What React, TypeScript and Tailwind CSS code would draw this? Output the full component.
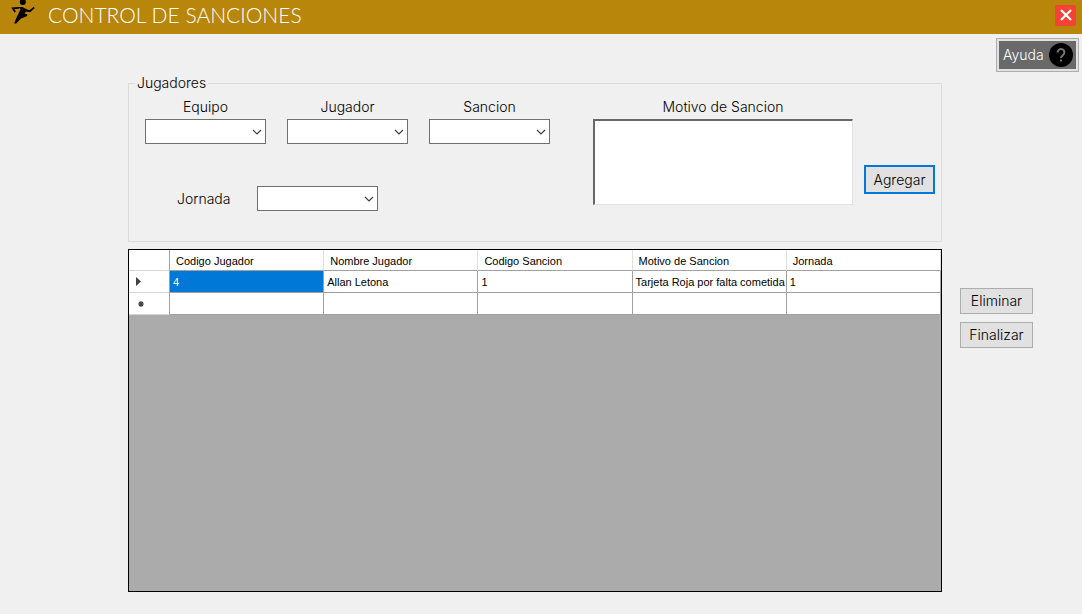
import { useId } from "react";
import type { ReactNode } from "react";

function RunnerIcon() {
  return (
    <svg viewBox="0 0 26 26" className="h-[26px] w-[26px]" aria-hidden="true">
      <circle cx="12.800" cy="2" r="3" fill="#000" />
      <path d="M5.200 12 2.800 8.300 9 7.800" fill="none" stroke="#000" strokeWidth="1.700" />
      <path d="M8.500 7h4l3.500 2 3.500 1.300L23.800 6.800l.7 1.400L20 12.300l-4-.7-1.500 1.900 2.700.8v1.700L11 18.500 6 23.800l-1.800-.6L6.800 17l1.700-3.500L10.500 9.300Z" fill="#000" />
    </svg>
  );
}

function HelpIcon() {
  return (
    <svg viewBox="0 0 24 24" className="h-6 w-6 shrink-0" aria-hidden="true">
      <circle cx="12" cy="12" r="12" fill="#000" />
      <path d="M8.600 9.500a3.400 3.400 0 1 1 5.200 2.800c-1.200.8-1.800 1.300-1.800 2.700" fill="none" stroke="#777" strokeWidth="2" />
      <rect x="11" y="16.500" width="2" height="2" fill="#777" />
    </svg>
  );
}

function Combo({ id }: { id: string }) {
  return (
    <span className="relative block">
      <select id={id} className="block h-[25px] w-[121px] appearance-none rounded-none border border-[#707070] bg-white px-1 outline-none">
        <option value=""></option>
      </select>
      <svg viewBox="0 0 10 6" className="pointer-events-none absolute top-[10px] right-1 h-[6px] w-[10px]" aria-hidden="true">
        <path d="M1 1l4 4 4-4" fill="none" stroke="#404040" strokeWidth="1.200" />
      </svg>
    </span>
  );
}

function LabeledCombo({ label }: { label: string }) {
  const id = useId();
  return (
    <div>
      <label htmlFor={id} className="block pb-1 text-center leading-4">
        {label}
      </label>
      <Combo id={id} />
    </div>
  );
}

function ActionButton({ children }: { children: ReactNode }) {
  return (
    <button type="button" className="h-[26px] w-[73px] border border-[#adadad] bg-[#e1e1e1] leading-4">
      {children}
    </button>
  );
}

const columns = ["Codigo Jugador", "Nombre Jugador", "Codigo Sancion", "Motivo de Sancion", "Jornada"];
const record = ["4", "Allan Letona", "1", "Tarjeta Roja por falta cometida", "1"];

function SanctionsTable() {
  return (
    <div className="flex-1 border border-black bg-[#ababab] font-['Liberation_Sans',Arial,sans-serif] text-[11px] leading-4 font-normal">
      <table className="w-full table-fixed border-separate border-spacing-0 bg-white text-left">
        <thead>
          <tr className="h-[21px]">
            <th className="w-[41px] border-r border-b border-r-[#a0a0a0] border-b-[#d4d4d4]" aria-label="Fila"></th>
            {columns.map((name) => (
              <th key={name} className="border-r border-b border-r-[#e0e0e0] border-b-[#a0a0a0] px-[6px] pt-[2px] font-normal whitespace-nowrap">
                {name}
              </th>
            ))}
          </tr>
        </thead>
        <tbody>
          <tr className="h-[22px]">
            <td className="border-r border-b border-r-[#a0a0a0] border-b-[#d4d4d4] pl-[7px]">
              <svg viewBox="0 0 5 9" className="h-[9px] w-[5px]" aria-hidden="true">
                <path d="M0 0l5 4.500L0 9Z" fill="#404040" />
              </svg>
            </td>
            {record.map((value, i) => (
              <td
                key={columns[i]}
                className={
                  i === 0
                    ? "border-r border-b border-[#a0a0a0] bg-[#0078d7] px-[3px] text-white"
                    : "overflow-hidden border-r border-b border-[#a0a0a0] px-[3px] whitespace-nowrap"
                }
              >
                {value}
              </td>
            ))}
          </tr>
          <tr className="h-[22px]">
            <td className="border-r border-b border-r-[#a0a0a0] border-b-[#d4d4d4] pl-[9px]">
              <svg viewBox="0 0 6 6" className="h-[6px] w-[6px]" aria-hidden="true">
                <path d="M3 0v6M0 3h6M1 1l4 4M5 1L1 5" stroke="#404040" strokeWidth="1.200" />
              </svg>
            </td>
            {columns.map((name) => (
              <td key={name} className="border-r border-b border-[#a0a0a0]"></td>
            ))}
          </tr>
        </tbody>
      </table>
    </div>
  );
}

export default function App() {
  return (
    <div className="flex min-h-screen flex-col bg-[#f0f0f0] font-['Century_Gothic',Inter,sans-serif] text-sm font-light text-black">
      <header className="flex h-[34px] items-center bg-[#b8860b] pr-[6px] pl-[10px]">
        <div className="self-start">
          <RunnerIcon />
        </div>
        <h1 className="ml-3 flex-1 pb-1 font-['Century_Gothic',Lato,sans-serif] text-[21px] leading-7 font-light text-white">
          CONTROL DE SANCIONES
        </h1>
        <button type="button" aria-label="Cerrar" className="mb-1 flex h-[21px] w-[21px] items-center justify-center rounded-xs bg-[#f44336]">
          <svg viewBox="0 0 12 12" className="h-3 w-3" aria-hidden="true">
            <path d="M1 1l10 10M11 1L1 11" stroke="#fff" strokeWidth="2.200" />
          </svg>
        </button>
      </header>

      <div className="flex justify-end pt-1 pr-[3px]">
        <button type="button" className="h-[34px] w-[83px] border border-[#adadad] bg-[#e1e1e1] p-[2px]">
          <span className="flex h-full items-center justify-between bg-[#696969] pr-[3px] pl-1 text-white">
            Ayuda
            <HelpIcon />
          </span>
        </button>
      </div>

      <main className="flex flex-1 gap-[18px] pt-[3px] pr-[49px] pb-[22px] pl-[128px]">
        <div className="flex min-w-0 flex-1 flex-col gap-[7px]">
          <fieldset className="border border-[#dcdcdc] pr-[6px] pb-[30px] pl-4">
            <legend className="ml-[-10px] px-[2px] leading-4">Jugadores</legend>
            <div className="flex pt-2">
              <div>
                <div className="flex gap-[21px]">
                  <LabeledCombo label="Equipo" />
                  <LabeledCombo label="Jugador" />
                  <LabeledCombo label="Sancion" />
                </div>
                <div className="mt-[42px] flex items-center gap-[27px] pl-8">
                  <label htmlFor="jornada">Jornada</label>
                  <Combo id="jornada" />
                </div>
              </div>
              <div className="ml-[43px] flex-1">
                <label htmlFor="motivo" className="block pb-1 text-center leading-4">
                  Motivo de Sancion
                </label>
                <textarea
                  id="motivo"
                  className="block h-[86px] w-full resize-none border-t-2 border-r border-b border-l-2 border-t-[#696969] border-r-[#e3e3e3] border-b-[#e3e3e3] border-l-[#696969] bg-white p-1 outline-none"
                />
              </div>
              <button type="button" className="mb-[17px] ml-[11px] h-[29px] w-[71px] self-end border-2 border-[#0078d7] bg-[#e1e1e1] leading-4">
                Agregar
              </button>
            </div>
          </fieldset>
          <SanctionsTable />
        </div>
        <div className="flex flex-col gap-2 pt-[213px]">
          <ActionButton>Eliminar</ActionButton>
          <ActionButton>Finalizar</ActionButton>
        </div>
      </main>
    </div>
  );
}
